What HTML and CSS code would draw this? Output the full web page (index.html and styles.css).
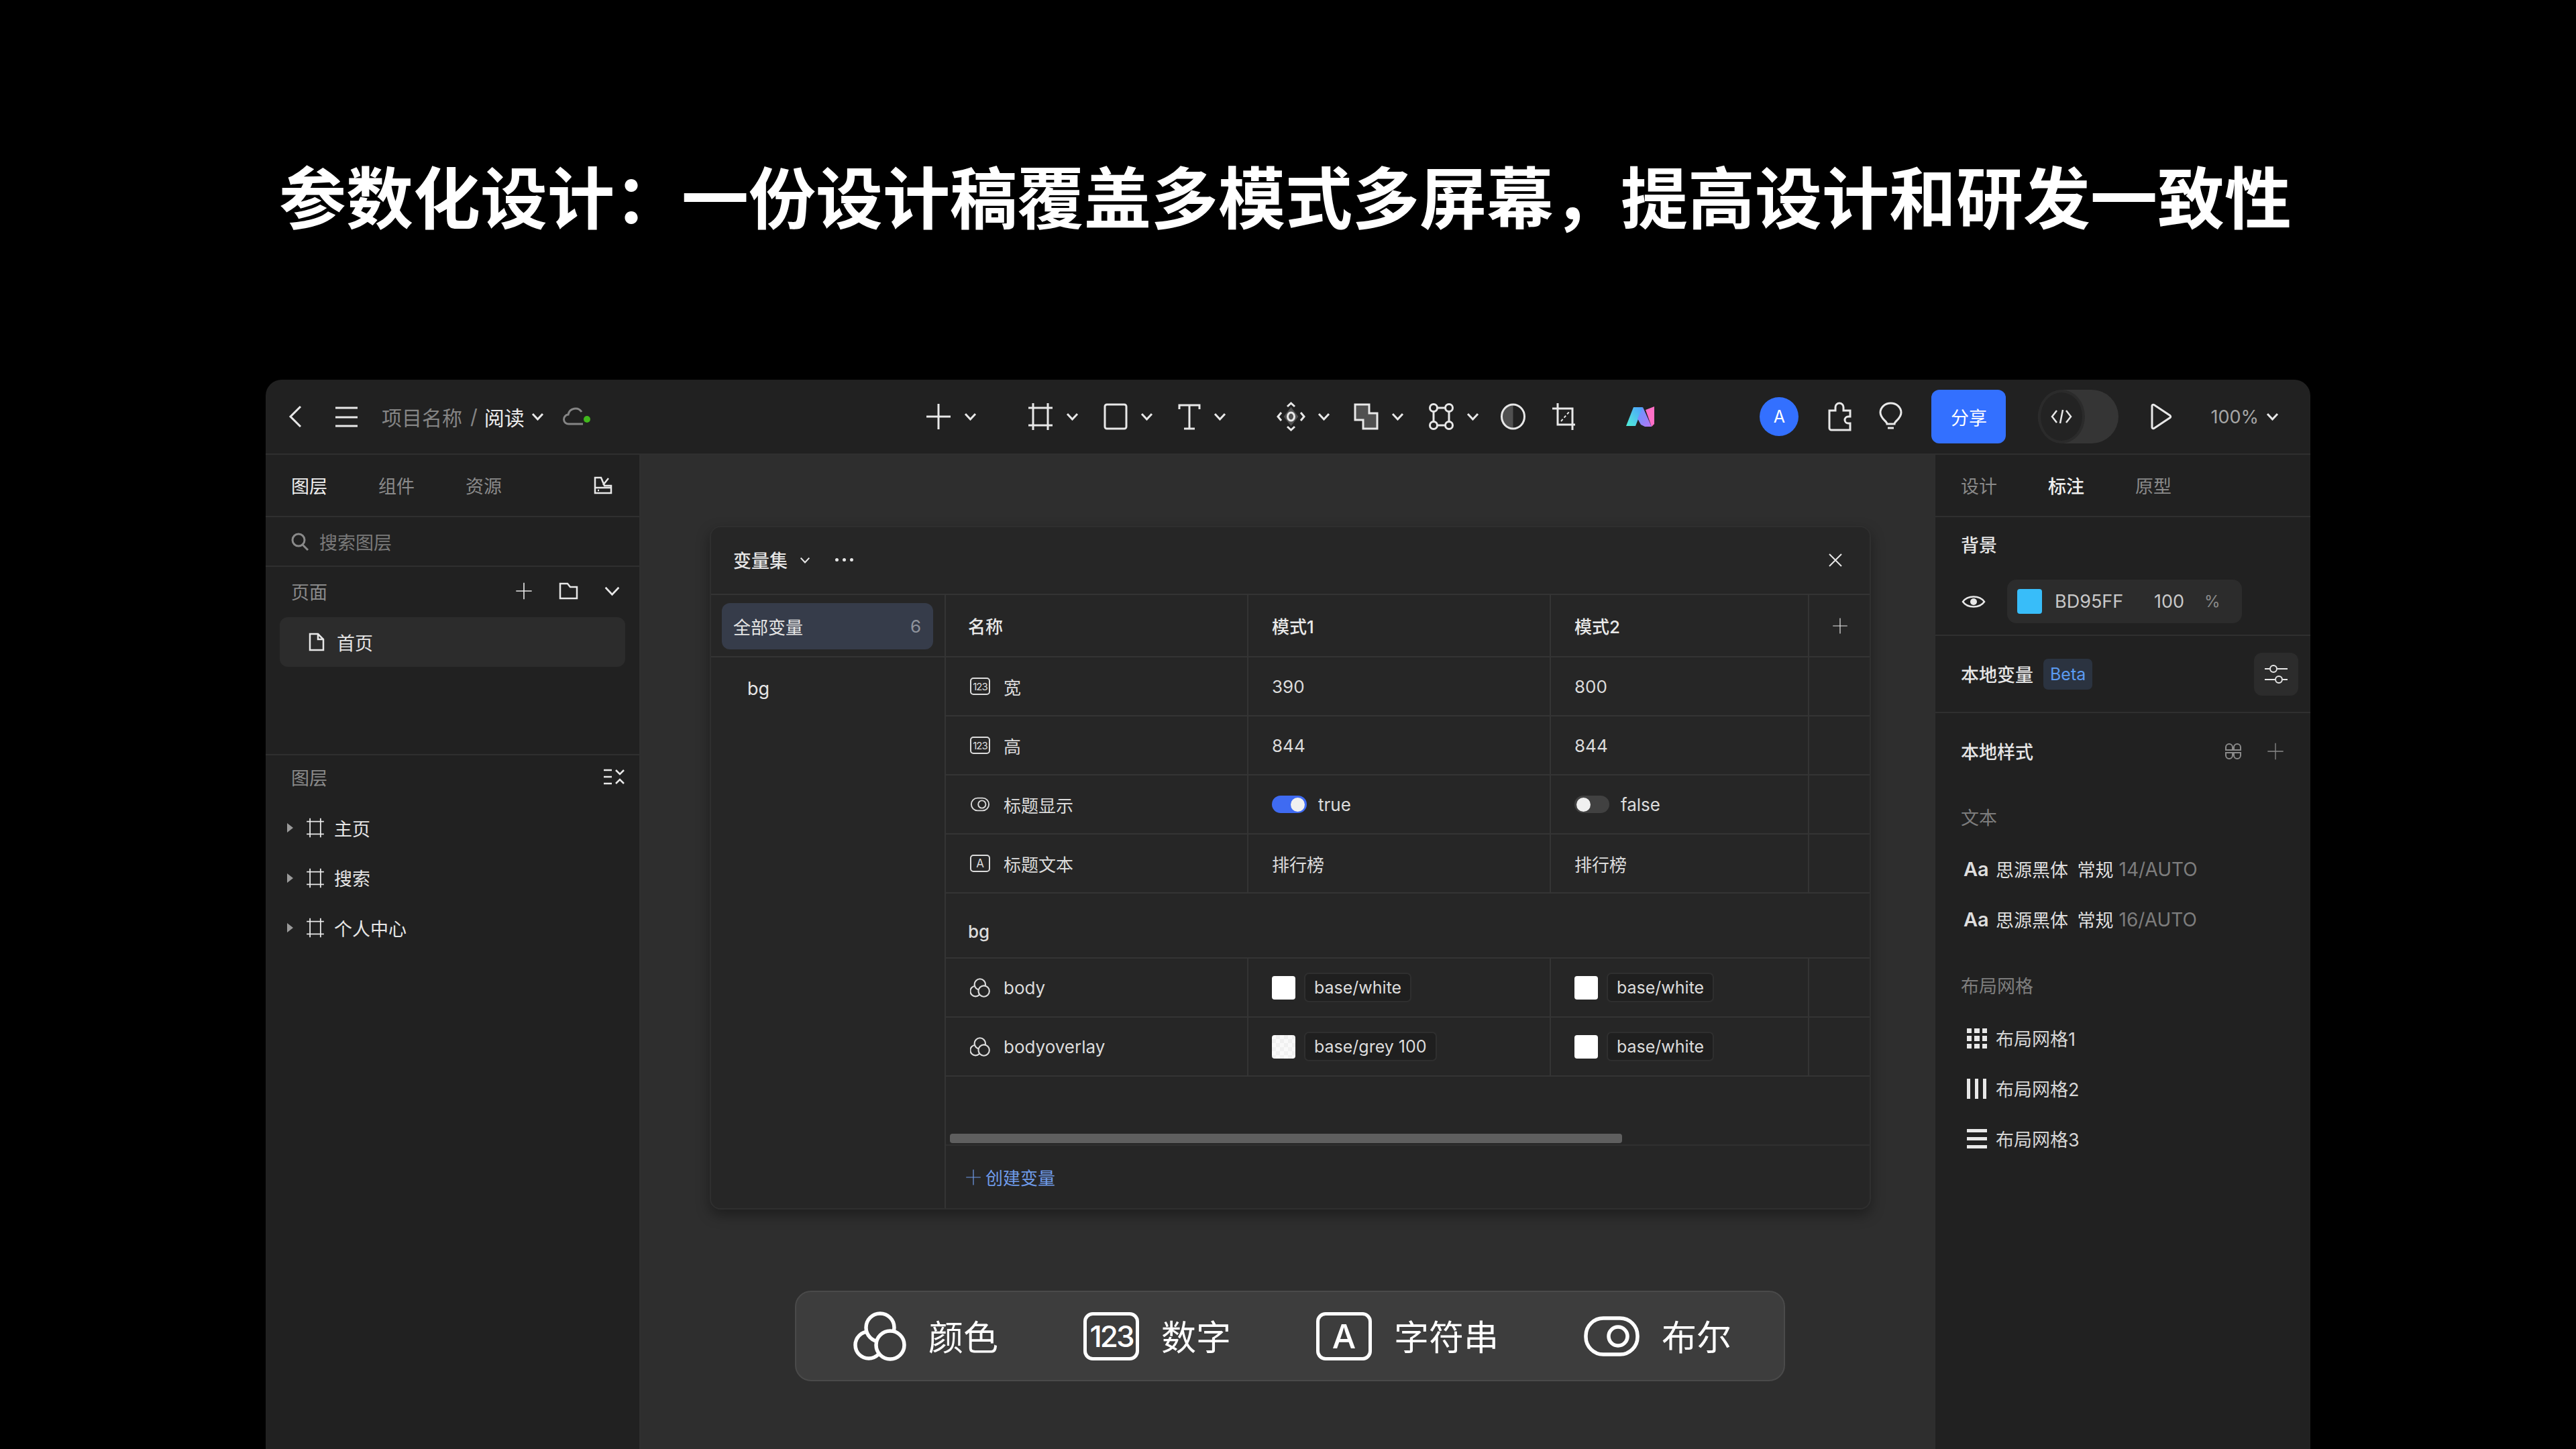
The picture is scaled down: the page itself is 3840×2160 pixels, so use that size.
FILE: index.html
```html
<!DOCTYPE html>
<html lang="zh-CN">
<head>
    <meta charset="UTF-8">
    <title>参数化设计</title>
    <link rel="stylesheet" href="styles.css">
</head>
<body>
    <!-- Icon sprite -->
    <svg class="sprite" xmlns="http://www.w3.org/2000/svg">
        <symbol id="i-chevron" viewBox="0 0 19 12"><path d="M2 2l7.5 8L17 2"/></symbol>
        <symbol id="i-plus" viewBox="0 0 38 40"><path d="M19 1v38M1 20h36"/></symbol>
        <symbol id="i-frame" viewBox="0 0 38 42"><path d="M8 1v40M30 1v40M1 8h36M1 34h36"/></symbol>
        <symbol id="i-doc" viewBox="0 0 24 28"><path d="M2 2h12l8 8v16H2zM14 2v8h8"/></symbol>
        <symbol id="i-color" viewBox="0 0 77 74"><circle cx="21" cy="50" r="20" fill="#262626" stroke-width="5.500"/><circle cx="38" cy="24" r="21" fill="#262626" stroke-width="5.500"/><circle cx="53" cy="50" r="21" fill="#262626" stroke-width="5.500"/></symbol>
        <symbol id="i-switch" viewBox="0 0 32 24"><rect x="2" y="2" width="28" height="20" rx="10"/><circle cx="19" cy="12" r="6"/></symbol>
    </svg>

    <h1 class="title">参数化设计：一份设计稿覆盖多模式多屏幕，提高设计和研发一致性</h1>

    <div class="app">
        <!-- Top bar -->
        <div class="topbar">
            <div class="top-left">
                <svg class="ic back" width="19" height="32" viewBox="0 0 19 32"><path d="M17 1L2 16l15 15"/></svg>
                <svg class="ic menu" width="33" height="31" viewBox="0 0 33 31"><path d="M0 2h33M0 16h33M0 29h33"/></svg>
                <span class="crumb">项目名称</span>
                <span class="crumb slash">/</span>
                <span class="crumb-current">阅读</span>
                <svg class="ic chev crumb-chev"><use href="#i-chevron"/></svg>
                <svg class="ic cloud" width="42" height="28" viewBox="0 0 42 28"><path d="M30 25H9a7 7 0 0 1-1-14A11 11 0 0 1 28 7"/><circle class="dot" cx="36" cy="18" r="5"/></svg>
            </div>

            <div class="tools">
                <div class="tool tool-first">
                    <svg class="ic" width="38" height="40"><use href="#i-plus"/></svg>
                    <svg class="ic chev"><use href="#i-chevron"/></svg>
                </div>
                <div class="tool tool-group">
                    <svg class="ic" width="38" height="42"><use href="#i-frame"/></svg>
                    <svg class="ic chev"><use href="#i-chevron"/></svg>
                </div>
                <div class="tool">
                    <svg class="ic" width="36" height="40" viewBox="0 0 36 40"><rect x="2" y="2" width="32" height="36" rx="3"/></svg>
                    <svg class="ic chev"><use href="#i-chevron"/></svg>
                </div>
                <div class="tool">
                    <svg class="ic" width="34" height="40" viewBox="0 0 34 40"><path d="M2 9V3h30v6M17 3v35M9 38h16"/></svg>
                    <svg class="ic chev"><use href="#i-chevron"/></svg>
                </div>
                <div class="tool tool-group">
                    <svg class="ic" width="41" height="42" viewBox="0 0 41 42"><path class="flat" d="M20.5 7l11 14-11 14-11-14z"/><ellipse cx="20.5" cy="21" rx="5" ry="6"/><path d="M15 6l5.500-5 5.500 5M15 36l5.500 5 5.500-5M6 15l-5 6 5 6M35 15l5 6-5 6"/></svg>
                    <svg class="ic chev"><use href="#i-chevron"/></svg>
                </div>
                <div class="tool tool-tight">
                    <svg class="ic" width="37" height="40" viewBox="0 0 37 40"><path class="shade" d="M2 2h21v13h12v23H14V25H2z"/></svg>
                    <svg class="ic chev"><use href="#i-chevron"/></svg>
                </div>
                <div class="tool">
                    <svg class="ic" width="37" height="40" viewBox="0 0 37 40"><circle cx="7" cy="7" r="5.500"/><circle cx="30" cy="7" r="5.500"/><circle cx="7" cy="33" r="5.500"/><circle cx="30" cy="33" r="5.500"/><path d="M12.500 7h12M12.500 33h12M7 12.500v15M30 12.500v15"/></svg>
                    <svg class="ic chev"><use href="#i-chevron"/></svg>
                </div>
                <svg class="ic half" width="37" height="40" viewBox="0 0 37 40"><path class="flat" d="M18.500 2a17 18 0 0 0 0 36z"/><ellipse cx="18.500" cy="20" rx="17" ry="18"/></svg>
                <svg class="ic crop" width="34" height="40" viewBox="0 0 34 40"><path d="M8 0v32h26M0 8h30v32"/><path class="thin" d="M13 27l12-14"/></svg>
                <svg class="logo" width="43" height="32" viewBox="0 0 43 32">
                    <defs>
                        <linearGradient id="logo-a" x1="0" y1="1" x2="1" y2="0"><stop offset="0" stop-color="#4ff0d6"/><stop offset="1" stop-color="#4e9dff"/></linearGradient>
                        <linearGradient id="logo-b" x1="0" y1="0" x2="1" y2="1"><stop offset="0" stop-color="#5c9cff"/><stop offset="1" stop-color="#b873f5"/></linearGradient>
                    </defs>
                    <polygon points="0,30 11,2 25,2 14,30" fill="url(#logo-a)"/>
                    <polygon points="25,2 38,31 28,31 22,28 17,19 22,8" fill="url(#logo-b)"/>
                    <polygon points="29,6 42,1 42,27 38,31" fill="#ff6fc6"/>
                </svg>
            </div>

            <div class="top-right">
                <span class="avatar">A</span>
                <svg class="ic puzzle" width="35" height="43" viewBox="0 0 35 43"><path d="M2 12h9V7a6 6 0 0 1 12 0v5h10v9h-3a5 5 0 0 0 0 10h3v10H5a3 3 0 0 1-3-3z"/></svg>
                <svg class="ic bulb" width="35" height="43" viewBox="0 0 35 43"><path d="M12 32c0-4-10-8-10-17a15.500 14 0 0 1 31 0c0 9-10 13-10 17zM13 38h9"/></svg>
                <button class="share">分享</button>
                <div class="code-toggle">
                    <span class="code-knob">
                        <svg class="ic" width="32" height="22" viewBox="0 0 32 22"><path d="M9 2l-7 9 7 9M23 2l7 9-7 9M18 1l-4 20"/></svg>
                    </span>
                </div>
                <svg class="ic play" width="33" height="40" viewBox="0 0 33 40"><path d="M3 4a2 2 0 0 1 3-1.500l24 16a2 2 0 0 1 0 3l-24 16a2 2 0 0 1-3-1.500z"/></svg>
                <span class="zoom-level">100%</span>
                <svg class="ic chev zoom-chev"><use href="#i-chevron"/></svg>
            </div>
        </div>

        <div class="workspace">
            <!-- Left panel -->
            <div class="panel-left">
                <div class="left-tabs">
                    <span class="tab active">图层</span>
                    <span class="tab">组件</span>
                    <span class="tab">资源</span>
                    <svg class="ic tab-icon" width="28" height="27" viewBox="0 0 28 27"><path d="M2 25V2h9l5 12h10v11zM2 17h24M22 3l-8 10M6 21h2"/></svg>
                </div>
                <div class="search">
                    <svg class="ic muted" width="26" height="27" viewBox="0 0 26 27"><ellipse cx="11" cy="11" rx="9" ry="9"/><path d="M17 18l8 8"/></svg>
                    <span class="search-text">搜索图层</span>
                </div>
                <div class="pages">
                    <div class="section-head">
                        <span class="section-title">页面</span>
                        <svg class="ic page-plus" width="26" height="26"><use href="#i-plus"/></svg>
                        <svg class="ic page-folder" width="29" height="26" viewBox="0 0 29 26"><path d="M2 2h11l4 5h10v17H2z"/></svg>
                        <svg class="ic page-chev" width="25" height="16"><use href="#i-chevron"/></svg>
                    </div>
                    <div class="page-item">
                        <svg class="ic" width="24" height="28"><use href="#i-doc"/></svg>
                        <span>首页</span>
                    </div>
                </div>
                <div class="layers">
                    <div class="section-head layers-head">
                        <span class="section-title">图层</span>
                        <svg class="ic collapse" width="31" height="24" viewBox="0 0 31 24"><path d="M0 2h12M0 12h12M0 22h12M18 2l6 6 6-6M18 22l6-6 6 6"/></svg>
                    </div>
                    <div class="layer"><i class="caret"></i><svg class="ic" width="28" height="30"><use href="#i-frame"/></svg><span>主页</span></div>
                    <div class="layer"><i class="caret"></i><svg class="ic" width="28" height="30"><use href="#i-frame"/></svg><span>搜索</span></div>
                    <div class="layer"><i class="caret"></i><svg class="ic" width="28" height="30"><use href="#i-frame"/></svg><span>个人中心</span></div>
                </div>
            </div>

            <!-- Canvas -->
            <div class="canvas">
                <div class="dialog">
                    <div class="dialog-head">
                        <span class="dialog-title">变量集</span>
                        <svg class="ic chev dialog-chev"><use href="#i-chevron"/></svg>
                        <span class="dots"><i></i><i></i><i></i></span>
                        <svg class="ic close" width="22" height="22" viewBox="0 0 22 22"><path d="M2 2l18 18M20 2L2 20"/></svg>
                    </div>
                    <div class="dialog-body">
                        <div class="sets">
                            <div class="sets-top">
                                <div class="set-active"><span>全部变量</span><span class="set-count">6</span></div>
                            </div>
                            <div class="set-item">bg</div>
                        </div>
                        <div class="table">
                            <div class="row row-head">
                                <div class="cell cell-strong">名称</div>
                                <div class="cell cell-strong">模式1</div>
                                <div class="cell cell-strong">模式2</div>
                                <div class="cell cell-add"><svg class="ic" width="24" height="24"><use href="#i-plus"/></svg></div>
                            </div>
                            <div class="row">
                                <div class="cell name"><span class="type-box">123</span>宽</div>
                                <div class="cell">390</div>
                                <div class="cell">800</div>
                                <div class="cell"></div>
                            </div>
                            <div class="row">
                                <div class="cell name"><span class="type-box">123</span>高</div>
                                <div class="cell">844</div>
                                <div class="cell">844</div>
                                <div class="cell"></div>
                            </div>
                            <div class="row">
                                <div class="cell name"><svg class="ic type-ic" width="30" height="24"><use href="#i-switch"/></svg>标题显示</div>
                                <div class="cell"><span class="switch on"></span>true</div>
                                <div class="cell"><span class="switch"></span>false</div>
                                <div class="cell"></div>
                            </div>
                            <div class="row">
                                <div class="cell name"><span class="type-box type-box-a">A</span>标题文本</div>
                                <div class="cell">排行榜</div>
                                <div class="cell">排行榜</div>
                                <div class="cell"></div>
                            </div>
                            <div class="row-group">bg</div>
                            <div class="row">
                                <div class="cell name"><svg class="ic type-ic" width="30" height="29"><use href="#i-color"/></svg>body</div>
                                <div class="cell"><span class="swatch"></span><span class="chip">base/white</span></div>
                                <div class="cell"><span class="swatch"></span><span class="chip">base/white</span></div>
                                <div class="cell"></div>
                            </div>
                            <div class="row">
                                <div class="cell name"><svg class="ic type-ic" width="30" height="29"><use href="#i-color"/></svg>bodyoverlay</div>
                                <div class="cell"><span class="swatch grey"></span><span class="chip">base/grey 100</span></div>
                                <div class="cell"><span class="swatch"></span><span class="chip">base/white</span></div>
                                <div class="cell"></div>
                            </div>
                            <div class="scroll-area"><div class="scroll-thumb"></div></div>
                            <div class="create">
                                <svg class="ic" width="24" height="24"><use href="#i-plus"/></svg>
                                <span>创建变量</span>
                            </div>
                        </div>
                    </div>
                </div>

                <div class="legend">
                    <div class="legend-item">
                        <svg class="ic legend-ic" width="77" height="74" viewBox="0 0 77 74"><circle cx="21" cy="50" r="20"/><circle cx="38" cy="24" r="21"/><circle cx="53" cy="50" r="21"/></svg>
                        <span>颜色</span>
                    </div>
                    <div class="legend-item">
                        <span class="legend-box">123</span>
                        <span>数字</span>
                    </div>
                    <div class="legend-item">
                        <span class="legend-box legend-box-a">A</span>
                        <span>字符串</span>
                    </div>
                    <div class="legend-item">
                        <svg class="ic legend-ic" width="83" height="60" viewBox="0 0 83 60"><rect x="3" y="3" width="77" height="54" rx="26"/><circle cx="51" cy="30" r="14"/></svg>
                        <span>布尔</span>
                    </div>
                </div>
            </div>

            <!-- Right panel -->
            <div class="panel-right">
                <div class="right-tabs">
                    <span class="rtab">设计</span>
                    <span class="rtab active">标注</span>
                    <span class="rtab">原型</span>
                </div>
                <div class="bg-section">
                    <div class="label-strong bg-label">背景</div>
                    <div class="bg-row">
                        <svg class="ic eye" width="34" height="22" viewBox="0 0 34 22"><path d="M1 11C8 1 26 1 33 11 26 21 8 21 1 11z"/><circle class="solid" cx="17" cy="11" r="5"/></svg>
                        <div class="fill-field">
                            <span class="fill-swatch"></span>
                            <span class="fill-hex">BD95FF</span>
                            <span class="fill-alpha">100</span>
                            <span class="fill-pct">%</span>
                        </div>
                    </div>
                </div>
                <div class="var-section">
                    <span class="label-strong">本地变量</span>
                    <span class="beta">Beta</span>
                    <span class="icon-btn">
                        <svg class="ic thin-ic" width="34" height="28" viewBox="0 0 34 28"><path d="M0 6h7M19 6h15M0 22h15M27 22h7"/><circle cx="13" cy="6" r="5"/><circle cx="21" cy="22" r="5"/></svg>
                    </span>
                </div>
                <div class="styles-section">
                    <div class="styles-head">
                        <span class="label-strong">本地样式</span>
                        <svg class="ic muted clover" width="26" height="26" viewBox="0 0 26 26"><path d="M2 11V7a5 5 0 0 1 10 0v4zM14 11V7a5 5 0 0 1 10 0v4zM2 15v4a5 5 0 0 0 10 0v-4zM14 15v4a5 5 0 0 0 10 0v-4z"/></svg>
                        <svg class="ic muted style-plus" width="26" height="26"><use href="#i-plus"/></svg>
                    </div>
                    <div class="label-muted text-label">文本</div>
                    <div class="text-style first"><b>Aa</b><span>思源黑体 常规</span><span class="size">14/AUTO</span></div>
                    <div class="text-style"><b>Aa</b><span>思源黑体 常规</span><span class="size">16/AUTO</span></div>
                    <div class="label-muted grid-label">布局网格</div>
                    <div class="grid-style first">
                        <svg class="grid-ic" width="30" height="30" viewBox="0 0 30 30"><path d="M0 0h7v7H0zM11 0h8v7h-8zM23 0h7v7h-7zM0 11h7v8H0zM11 11h8v8h-8zM23 11h7v8h-7zM0 23h7v7H0zM11 23h8v7h-8zM23 23h7v7h-7z"/></svg>
                        <span>布局网格1</span>
                    </div>
                    <div class="grid-style">
                        <svg class="grid-ic" width="30" height="30" viewBox="0 0 30 30"><path d="M0 0h5v30H0zM12 0h5v30h-5zM24 0h5v30h-5z"/></svg>
                        <span>布局网格2</span>
                    </div>
                    <div class="grid-style">
                        <svg class="grid-ic" width="30" height="30" viewBox="0 0 30 30"><path d="M0 0h30v5H0zM0 12h30v5H0zM0 24h30v5H0z"/></svg>
                        <span>布局网格3</span>
                    </div>
                </div>
            </div>
        </div>
    </div>
</body>
</html>
```

FILE: styles.css
```css
* {
    margin: 0;
    padding: 0;
    box-sizing: border-box;
}

html, body {
    width: 3840px;
    height: 2160px;
    overflow: hidden;
}

body {
    background-color: #000;
    color: #e6e6e6;
    font-family: Inter, "Noto Sans CJK SC", sans-serif;
    font-size: 27px;
    display: flex;
    flex-direction: column;
    align-items: center;
}

.sprite {
    display: none;
}

.title {
    height: 566px;
    padding-top: 12px;
    margin-right: 8px;
    display: flex;
    align-items: center;
    flex: none;
    color: #fff;
    font-size: 100px;
    font-weight: 700;
    white-space: nowrap;
}

/* Shared icon styles */
.ic {
    fill: none;
    stroke: currentColor;
    stroke-width: 3;
    color: #e8e8e8;
    flex: none;
    overflow: visible;
}

.ic .shade {
    fill: #505050;
}

.ic .flat {
    fill: #505050;
    stroke: none;
}

.ic .solid {
    fill: currentColor;
    stroke: none;
}

.ic .thin {
    stroke-width: 2;
    stroke-dasharray: 4 3;
}

.ic.muted {
    color: #8a8a8a;
}

.chev {
    width: 19px;
    height: 12px;
}

/* App frame */
.app {
    width: 3048px;
    height: 1594px;
    flex: none;
    background-color: #212121;
    border-radius: 24px 24px 0 0;
    overflow: hidden;
    display: flex;
    flex-direction: column;
}

/* Top bar */
.topbar {
    height: 112px;
    flex: none;
    display: flex;
    align-items: center;
    padding: 0 47px 0 35px;
    border-bottom: 2px solid #2f2f2f;
}

.top-left {
    width: 949px;
    display: flex;
    align-items: center;
}

.menu {
    margin-left: 50px;
    margin-right: 36px;
}

.crumb {
    color: #858585;
    font-size: 30px;
}

.slash {
    margin: 0 10px 0 12px;
}

.crumb-current {
    color: #ececec;
    font-size: 30px;
}

.crumb-chev {
    margin-left: 10px;
}

.cloud {
    margin-left: 28px;
    color: #858585;
}

.cloud .dot {
    fill: #41b81c;
    stroke: none;
}

.tools {
    display: flex;
    align-items: center;
}

.tool {
    display: flex;
    align-items: center;
    gap: 19px;
    margin-left: 37px;
}

.tool-first {
    margin-left: 0;
}

.tool-group {
    margin-left: 76px;
}

.tool-tight {
    margin-left: 35px;
}

.half {
    margin-left: 32px;
}

.crop {
    margin-left: 40px;
}

.logo {
    margin-left: 76px;
}

.top-right {
    margin-left: auto;
    display: flex;
    align-items: center;
}

.avatar {
    width: 58px;
    height: 58px;
    border-radius: 50%;
    background-color: #3370ff;
    color: #fff;
    font-size: 25px;
    display: flex;
    align-items: center;
    justify-content: center;
}

.puzzle {
    margin-left: 44px;
}

.bulb {
    margin-left: 41px;
}

.share {
    width: 111px;
    height: 80px;
    margin-left: 43px;
    border: none;
    border-radius: 12px;
    background-color: #3370ff;
    color: #fff;
    font-family: inherit;
    font-size: 27px;
}

.code-toggle {
    width: 120px;
    height: 80px;
    margin-left: 48px;
    border-radius: 40px;
    background-color: #353535;
}

.code-knob {
    width: 70px;
    height: 80px;
    border-radius: 50%;
    background-color: #232323;
    border: 4px solid #2b2b2b;
    display: flex;
    align-items: center;
    justify-content: center;
}

.code-knob .ic {
    stroke-width: 2.5;
}

.play {
    margin-left: 47px;
}

.zoom-level {
    margin-left: 57px;
    color: #a6a6a6;
    font-size: 27px;
}

.zoom-chev {
    margin-left: 11px;
}

.workspace {
    flex: 1;
    display: flex;
    min-height: 0;
}

/* Left panel */
.panel-left {
    width: 560px;
    flex: none;
    border-right: 3px solid #2f2f2f;
}

.left-tabs {
    height: 93px;
    display: flex;
    align-items: center;
    padding-left: 38px;
    gap: 76px;
    border-bottom: 2px solid #2f2f2f;
}

.tab {
    color: #8a8a8a;
}

.tab.active {
    color: #f0f0f0;
}

.tab-icon {
    margin-left: 61px;
    stroke-width: 2.500;
}

.search {
    height: 74px;
    display: flex;
    align-items: center;
    gap: 16px;
    padding-left: 38px;
    border-bottom: 2px solid #2f2f2f;
    color: #7a7a7a;
}

.pages {
    height: 281px;
    padding-top: 16px;
    border-bottom: 2px solid #2f2f2f;
}

.section-head {
    height: 40px;
    display: flex;
    align-items: center;
    padding-left: 38px;
}

.section-title {
    color: #8a8a8a;
}

.page-plus {
    margin-left: 280px;
    stroke-width: 2.500;
}

.page-folder {
    margin-left: 39px;
    stroke-width: 2.500;
}

.page-chev {
    margin-left: 38px;
    stroke-width: 2;
}

.page-item {
    height: 74px;
    margin: 19px 21px 0;
    padding-left: 43px;
    border-radius: 12px;
    background-color: #2c2c2c;
    display: flex;
    align-items: center;
    gap: 18px;
}

.page-item .ic {
    stroke-width: 2.500;
}

.layers-head {
    height: 40px;
    margin-top: 12px;
    margin-bottom: 19px;
}

.collapse {
    margin-left: auto;
    margin-right: 22px;
    stroke-width: 2.500;
}

.layer {
    height: 74.5px;
    display: flex;
    align-items: center;
    padding-left: 32px;
}

.layer .ic {
    margin-left: 19px;
    margin-right: 14px;
    stroke-width: 2.500;
}

.caret {
    border-left: 9px solid #9a9a9a;
    border-top: 7px solid transparent;
    border-bottom: 7px solid transparent;
}

/* Canvas */
.canvas {
    flex: 1;
    min-width: 0;
    background-color: #2e2e2e;
    padding: 106px 0 0 102px;
}

.dialog {
    width: 1731px;
    height: 1019px;
    background-color: #262626;
    border: 2px solid #2f2f2f;
    border-radius: 16px;
    box-shadow: 0 8px 20px rgba(0, 0, 0, 0.35);
    display: flex;
    flex-direction: column;
    overflow: hidden;
}

.dialog-head {
    height: 101px;
    flex: none;
    display: flex;
    align-items: center;
    padding: 0 0 2px 33px;
    border-bottom: 2px solid #343434;
}

.dialog-title {
    font-weight: 500;
}

.dialog-chev {
    margin-left: 18px;
    width: 16px;
    stroke-width: 2.500;
}

.dots {
    margin-left: 37px;
    display: flex;
    gap: 6px;
}

.dots i {
    width: 5px;
    height: 5px;
    border-radius: 50%;
    background-color: #e6e6e6;
}

.close {
    margin-left: auto;
    margin-right: 40px;
    stroke-width: 2;
}

.dialog-body {
    flex: 1;
    display: flex;
    min-height: 0;
}

.sets {
    width: 350px;
    flex: none;
    border-right: 2px solid #343434;
}

.sets-top {
    height: 93px;
    padding: 12px 17px 0 16px;
    border-bottom: 2px solid #343434;
}

.set-active {
    height: 69px;
    padding: 0 18px 0 17px;
    border-radius: 12px;
    background-color: #363c4a;
    display: flex;
    align-items: center;
    justify-content: space-between;
    font-size: 26px;
}

.set-count {
    color: #8f939c;
}

.set-item {
    height: 92px;
    padding-left: 54px;
    display: flex;
    align-items: center;
}

.table {
    flex: 1;
    min-width: 0;
    display: flex;
    flex-direction: column;
}

.row {
    height: 88px;
    flex: none;
    display: grid;
    grid-template-columns: 451px 451px 385px 1fr;
    border-bottom: 2px solid #343434;
}

.row-head {
    height: 93px;
}

.cell {
    display: flex;
    align-items: center;
    padding-left: 35px;
    border-right: 2px solid #343434;
    color: #dcdcdc;
    font-size: 26px;
}

.cell:first-child {
    padding-left: 33px;
}

.cell:last-child {
    border-right: none;
}

.cell-strong {
    color: #e8e8e8;
    font-weight: 500;
}

.cell-add {
    padding-left: 34px;
}

.cell-add .ic {
    stroke-width: 2;
}

.cell.name {
    padding-left: 36px;
}

.type-ic {
    margin-right: 20px;
    stroke-width: 2;
    color: #dcdcdc;
}

.type-box {
    width: 30px;
    height: 26px;
    margin-right: 20px;
    flex: none;
    border: 2px solid #dcdcdc;
    border-radius: 5px;
    display: flex;
    align-items: center;
    justify-content: center;
    font-size: 15px;
    letter-spacing: -1px;
}

.type-box-a {
    font-size: 17px;
    letter-spacing: 0;
}

.switch {
    width: 52px;
    height: 26px;
    margin-right: 17px;
    border-radius: 13px;
    background-color: #414141;
    display: flex;
    align-items: center;
    padding: 0 3px;
}

.switch::after {
    content: "";
    width: 21px;
    height: 21px;
    border-radius: 50%;
    background-color: #f0f0f0;
}

.switch.on {
    background-color: #3f6bf2;
    justify-content: flex-end;
}

.row-group {
    height: 97px;
    flex: none;
    display: flex;
    align-items: center;
    padding: 17px 0 0 33px;
    border-bottom: 2px solid #343434;
    font-size: 26px;
    font-weight: 500;
    color: #dcdcdc;
}

.swatch {
    width: 35px;
    height: 35px;
    margin-right: 13px;
    border-radius: 4px;
    background-color: #fff;
}

.swatch.grey {
    background-color: #f4f4f4;
    background-image: conic-gradient(#f0f0f0 25%, #f9f9f9 0 50%, #f0f0f0 0 75%, #f9f9f9 0);
    background-size: 12px 12px;
}

.chip {
    height: 44px;
    padding: 0 13px;
    border: 2px solid #2f2f2f;
    border-radius: 7px;
    background-color: #1f1f1f;
    display: flex;
    align-items: center;
    font-size: 25px;
}

.scroll-area {
    height: 103px;
    flex: none;
    padding: 85px 0 0 6px;
    border-bottom: 2px solid #303030;
}

.scroll-thumb {
    width: 1002px;
    height: 14px;
    border-radius: 4px;
    background-color: #5f5f5f;
}

.create {
    flex: 1;
    display: flex;
    align-items: center;
    gap: 6px;
    padding-left: 29px;
    color: #6f9bea;
    font-size: 26px;
}

.create .ic {
    color: #6f9bea;
    stroke-width: 2;
}

/* Legend */
.legend {
    width: 1476px;
    height: 135px;
    margin: 121px 0 0 127px;
    padding: 0 0 0 87px;
    background-color: #3d3d3d;
    border: 2px solid #4a4a4a;
    border-radius: 24px;
    display: flex;
    align-items: center;
    color: #fff;
    font-size: 52px;
    white-space: nowrap;
}

.legend-item {
    display: flex;
    flex: none;
    align-items: center;
    gap: 33px;
    margin-right: 127px;
}

.legend-item > span:last-child {
    margin-top: -3px;
}

.legend-ic {
    color: #fff;
    stroke-width: 5.5;
}

.legend-ic circle {
    fill: #3d3d3d;
}

.legend-box {
    width: 83px;
    height: 72px;
    border: 5px solid #fff;
    border-radius: 14px;
    display: flex;
    align-items: center;
    justify-content: center;
    font-size: 44px;
    font-weight: 500;
    letter-spacing: -3px;
}

.legend-box-a {
    font-size: 50px;
    letter-spacing: 0;
}

/* Right panel */
.panel-right {
    flex: none;
    width: 559px;
}

.right-tabs {
    height: 93px;
    display: flex;
    align-items: center;
    gap: 76px;
    padding-left: 38px;
    border-bottom: 2px solid #2f2f2f;
}

.rtab {
    color: #8a8a8a;
}

.rtab.active {
    color: #f0f0f0;
    font-weight: 500;
}

.label-strong {
    color: #e6e6e6;
    font-weight: 500;
}

.label-muted {
    color: #7d7d7d;
}

.bg-section {
    height: 177px;
    padding: 20px 0 0 38px;
    border-bottom: 2px solid #2f2f2f;
}

.bg-label {
    height: 40px;
    display: flex;
    align-items: center;
}

.bg-row {
    display: flex;
    align-items: center;
    margin-top: 33px;
}

.eye {
    margin-left: 2px;
    margin-right: 33px;
    stroke-width: 2.500;
}

.fill-field {
    width: 350px;
    height: 65px;
    padding-left: 15px;
    border-radius: 14px;
    background-color: #2c2c2c;
    display: flex;
    align-items: center;
    color: #c8c8c8;
}

.fill-swatch {
    width: 37px;
    height: 37px;
    margin-right: 19px;
    border-radius: 4px;
    background-color: #38bdf9;
}

.fill-hex {
    width: 148px;
}

.fill-alpha {
    width: 75px;
}

.fill-pct {
    color: #8a8a8a;
    font-size: 24px;
}

.var-section {
    height: 115px;
    display: flex;
    align-items: center;
    padding-left: 38px;
    border-bottom: 2px solid #2f2f2f;
}

.beta {
    height: 46px;
    margin-left: 15px;
    padding: 0 10px;
    border-radius: 7px;
    background-color: #2b3340;
    color: #5b9bf2;
    font-size: 25px;
    display: flex;
    align-items: center;
}

.icon-btn {
    width: 66px;
    height: 64px;
    margin-left: auto;
    margin-right: 18px;
    border-radius: 12px;
    background-color: #2c2c2c;
    display: flex;
    align-items: center;
    justify-content: center;
}

.thin-ic {
    stroke-width: 2;
}

.styles-section {
    padding: 0 0 0 38px;
}

.styles-head {
    height: 114px;
    display: flex;
    align-items: center;
}

.styles-head .label-strong {
    margin-top: -2px;
}

.clover {
    margin-left: auto;
    stroke-width: 2;
}

.style-plus {
    margin-left: 37px;
    margin-right: 39px;
    stroke-width: 2;
}

.text-label {
    height: 40px;
    margin-top: 20px;
    display: flex;
    align-items: center;
}

.text-style {
    height: 75px;
    display: flex;
    align-items: center;
    padding-left: 4px;
    color: #dedede;
    font-size: 27px;
    word-spacing: 6px;
}

.text-style.first {
    margin-top: 21px;
}

.text-style b {
    width: 48px;
    font-size: 29px;
    font-weight: 600;
}

.size {
    margin-left: 8px;
    color: #7d7d7d;
    font-size: 28px;
}

.grid-label {
    height: 40px;
    margin-top: 40px;
    display: flex;
    align-items: center;
}

.grid-style {
    height: 75px;
    display: flex;
    align-items: center;
    gap: 13px;
    padding-left: 9px;
    color: #d6d6d6;
    font-size: 27px;
}

.grid-style.first {
    margin-top: 22px;
}

.grid-ic {
    fill: #e8e8e8;
    flex: none;
}
```
